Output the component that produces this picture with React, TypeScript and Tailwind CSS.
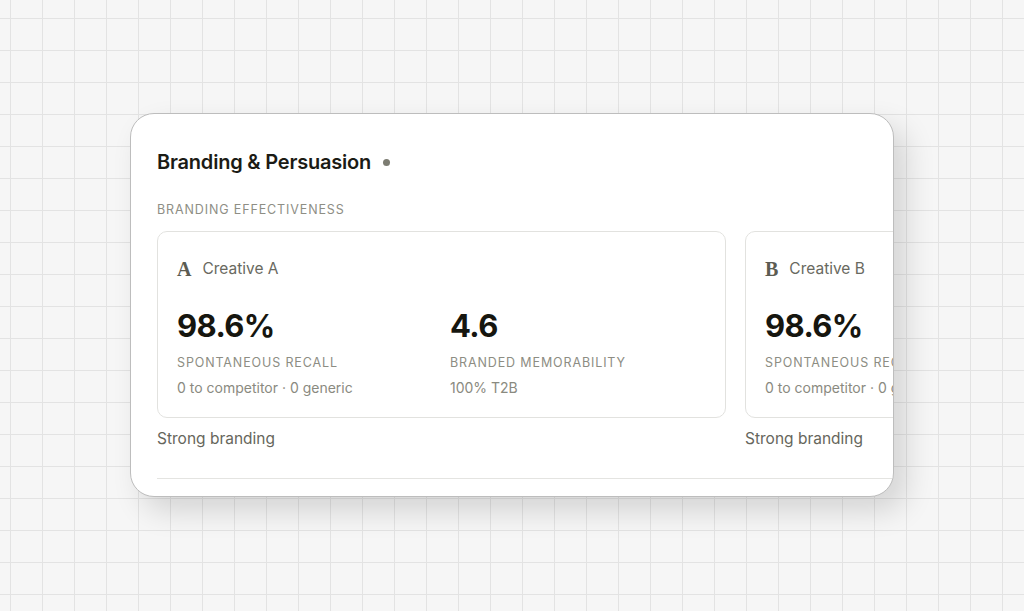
import React from "react";

function Metric({ value, label, sub }: { value: string; label: string; sub: string }) {
  return (
    <div className="flex flex-col">
      <div className="text-[31px] leading-[40px] font-bold tracking-[-0.02em] text-[#16160f]">{value}</div>
      <div className="mt-[9px] text-[12.5px] leading-[16px] tracking-[0.07em] text-[#8d8d83] whitespace-nowrap">{label}</div>
      <div className="mt-[8px] text-[14px] leading-[18px] text-[#8a8a80] whitespace-nowrap">{sub}</div>
    </div>
  );
}

function Creative({ letter, name }: { letter: string; name: string }) {
  return (
    <div className="flex w-[569px] shrink-0 flex-col">
      <div className="h-[187px] rounded-[10px] border border-[#e2e2df] px-[19px] pt-[27px]">
        <div className="flex items-center gap-[11px] h-[20px]">
          <span className="text-[20px] font-bold leading-[20px] text-[#5c5c52]" style={{ fontFamily: '"Liberation Serif", "DejaVu Serif", serif' }}>
            {letter}
          </span>
          <span className="text-[15.5px] leading-[20px] text-[#696960]">{name}</span>
        </div>
        <div className="mt-[27px] grid grid-cols-[273px_1fr]">
          <Metric value="98.6%" label="SPONTANEOUS RECALL" sub="0 to competitor · 0 generic" />
          <Metric value="4.6" label="BRANDED MEMORABILITY" sub="100% T2B" />
        </div>
      </div>
      <div className="mt-[11px] text-[15.5px] leading-[20px] text-[#66665c]">Strong branding</div>
    </div>
  );
}

export default function App() {
  return (
    <div
      className="min-h-[611px] w-full bg-[#f6f6f6] bg-[linear-gradient(to_right,#e3e3e3_1px,transparent_1px),linear-gradient(to_bottom,#e3e3e3_1px,transparent_1px)] bg-[size:32px_32px] bg-[position:10px_18px] pl-[130px] pt-[113px]"
      style={{ fontFamily: 'Inter, "Liberation Sans", sans-serif' }}
    >
      <div className="relative h-[384px] w-[764px] overflow-hidden rounded-[24px] border-[1.5px] border-[#bdbdbd] bg-white shadow-[12px_14px_30px_rgba(0,0,0,0.14)]">
        <div className="pl-[26px] pt-[36px]">
          <div className="flex items-center gap-[12px]">
            <h1 className="text-[20px] font-semibold leading-[24px] tracking-[-0.01em] text-[#1b1b15]">Branding &amp; Persuasion</h1>
            <span className="h-[7px] w-[7px] rounded-full bg-[#7c7c72]" />
          </div>
          <div className="mt-[28px] text-[12.5px] leading-[16px] tracking-[0.07em] text-[#8e8e85]">BRANDING EFFECTIVENESS</div>
          <div className="mt-[13px] flex gap-[19px]">
            <Creative letter="A" name="Creative A" />
            <Creative letter="B" name="Creative B" />
          </div>
          <div className="mt-[29px] h-px bg-[#e4e4e1]" />
        </div>
      </div>
    </div>
  );
}
